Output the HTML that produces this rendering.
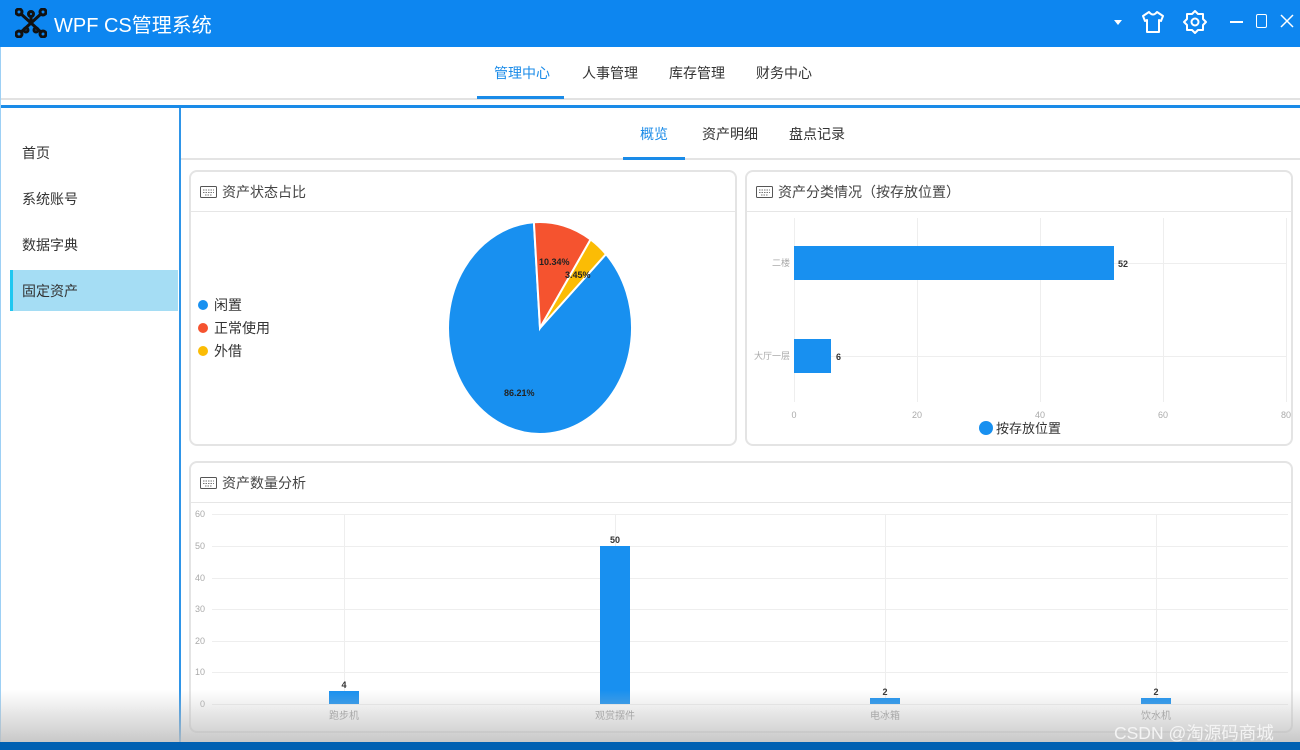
<!DOCTYPE html>
<html><head><meta charset="utf-8"><style>
*{margin:0;padding:0;box-sizing:border-box}
body{width:1300px;height:750px;position:relative;overflow:hidden;background:#fff;font-family:"Liberation Sans","Noto Sans CJK SC",sans-serif;color:#333}
.a{position:absolute}
.t{font-size:14px;white-space:nowrap}
.panel{position:absolute;border:2px solid #e4e4e4;border-radius:8px;background:#fff}
.ph{position:absolute;left:0;right:0;top:0;height:40px;border-bottom:1px solid #e6e6e6}
.ph span{position:absolute;left:31px;top:10px;font-size:14px;color:#444}
.kb{position:absolute;left:9px;top:14px}
</style></head><body>
<div class="a" style="left:0;top:0;width:1300px;height:47px;background:#0d86f0"></div>
<svg class="a" style="left:15px;top:8px" width="32" height="30" viewBox="0 0 32 30"><g stroke="#111" stroke-width="3" fill="none"><line x1="5" y1="5" x2="27" y2="25"/><line x1="27" y1="5" x2="5" y2="25"/><line x1="16" y1="15" x2="16" y2="8"/><circle cx="4" cy="4" r="3"/><circle cx="28" cy="4" r="3"/><circle cx="4" cy="26" r="3"/><circle cx="28" cy="26" r="3"/><circle cx="16" cy="6" r="2.5"/><circle cx="11" cy="22" r="2"/><circle cx="21" cy="22" r="2"/></g></svg>
<div class="a" style="left:54px;top:9px;font-size:20px;color:#fff">WPF CS管理系统</div>
<svg class="a" style="left:1113px;top:18px" width="10" height="8"><path d="M1 2h8l-4 5z" fill="#fff"/></svg>
<svg class="a" style="left:1140px;top:9px" width="26" height="26" viewBox="0 0 26 26"><path d="M9 3 L3 7 L5 12 L7 11 L7 23 L19 23 L19 11 L21 12 L23 7 L17 3 Q13 8 9 3Z" fill="none" stroke="#fff" stroke-width="2" stroke-linejoin="round"/></svg>
<svg class="a" style="left:1182px;top:9px" width="26" height="26" viewBox="0 0 26 26"><path d="M13 2 L16 5 L21 5 L21 10 L24 13 L21 16 L21 21 L16 21 L13 24 L10 21 L5 21 L5 16 L2 13 L5 10 L5 5 L10 5Z" fill="none" stroke="#fff" stroke-width="2" stroke-linejoin="round"/><circle cx="13" cy="13" r="3.5" fill="none" stroke="#fff" stroke-width="2"/></svg>
<div class="a" style="left:1230px;top:21px;width:13px;height:1.5px;background:#fff"></div>
<div class="a" style="left:1256px;top:14px;width:11px;height:14px;border:1.5px solid #fff;border-radius:2px"></div>
<svg class="a" style="left:1280px;top:14px" width="14" height="14"><path d="M1 1L13 13M13 1L1 13" stroke="#fff" stroke-width="1.5"/></svg>
<div class="a t" style="left:494px;top:63px;color:#1a8be8">管理中心</div>
<div class="a t" style="left:582px;top:63px">人事管理</div>
<div class="a t" style="left:669px;top:63px">库存管理</div>
<div class="a t" style="left:756px;top:63px">财务中心</div>
<div class="a" style="left:0;top:98px;width:1300px;height:2px;background:#e2e2e2"></div>
<div class="a" style="left:477px;top:96px;width:87px;height:3px;background:#1a8be8"></div>
<div class="a" style="left:0;top:105px;width:1300px;height:3px;background:#1a8be8"></div>
<div class="a" style="left:0;top:47px;width:1px;height:700px;background:#9dd0f5"></div>
<div class="a" style="left:179px;top:108px;width:2px;height:640px;background:#2f95e8"></div>
<div class="a t" style="left:22px;top:143px">首页</div>
<div class="a t" style="left:22px;top:189px">系统账号</div>
<div class="a t" style="left:22px;top:235px">数据字典</div>
<div class="a" style="left:10px;top:270px;width:168px;height:41px;background:#a5ddf4;border-left:3px solid #1fc7f0"></div>
<div class="a t" style="left:22px;top:281px">固定资产</div>
<div class="a t" style="left:640px;top:124px;color:#1a8be8">概览</div>
<div class="a t" style="left:702px;top:124px">资产明细</div>
<div class="a t" style="left:789px;top:124px">盘点记录</div>
<div class="a" style="left:181px;top:158px;width:1119px;height:2px;background:#e4e4e4"></div>
<div class="a" style="left:623px;top:157px;width:62px;height:3px;background:#1a8be8"></div>

<div class="panel" style="left:189px;top:170px;width:548px;height:276px">
<div class="ph"><svg class="kb" width="17" height="12"><rect x="0.5" y="0.5" width="16" height="11" rx="1" fill="none" stroke="#555"/><path d="M3 4h11M3 6.5h11M5 9h7" stroke="#777" stroke-dasharray="1.5 1"/></svg><span>资产状态占比</span></div>
</div>
<div class="a" style="left:198px;top:300px;width:10px;height:10px;border-radius:50%;background:#1890f0"></div>
<div class="a t" style="left:214px;top:295px">闲置</div>
<div class="a" style="left:198px;top:323px;width:10px;height:10px;border-radius:50%;background:#f5532f"></div>
<div class="a t" style="left:214px;top:318px">正常使用</div>
<div class="a" style="left:198px;top:346px;width:10px;height:10px;border-radius:50%;background:#fbbc05"></div>
<div class="a t" style="left:214px;top:341px">外借</div>
<svg class="a" style="left:0;top:0" width="1300" height="750">
<g stroke="#fff" stroke-width="2">
<path d="M540 328 L606 254.1 A92 106 0 1 1 533.9 222.2Z" fill="#1890f0"/>
<path d="M540 328 L533.9 222.2 A92 106 0 0 1 590.6 239.5Z" fill="#f5532f"/>
<path d="M540 328 L590.6 239.5 A92 106 0 0 1 606 254.1Z" fill="#fbbc05"/>
</g>
<g font-family="Liberation Sans" font-size="9" font-weight="bold" fill="#222">
<text x="539" y="265">10.34%</text><text x="565" y="278">3.45%</text><text x="504" y="396">86.21%</text>
</g>
</svg>

<div class="panel" style="left:745px;top:170px;width:548px;height:276px">
<div class="ph"><svg class="kb" width="17" height="12"><rect x="0.5" y="0.5" width="16" height="11" rx="1" fill="none" stroke="#555"/><path d="M3 4h11M3 6.5h11M5 9h7" stroke="#777" stroke-dasharray="1.5 1"/></svg><span>资产分类情况（按存放位置）</span></div>
</div>
<svg class="a" style="left:0;top:0" width="1300" height="750">
<g stroke="#eee" stroke-width="1">
<line x1="794.5" y1="218" x2="794.5" y2="402"/><line x1="917.5" y1="218" x2="917.5" y2="402"/><line x1="1040.5" y1="218" x2="1040.5" y2="402"/><line x1="1163.5" y1="218" x2="1163.5" y2="402"/><line x1="1286.5" y1="218" x2="1286.5" y2="402"/>
<line x1="794" y1="263.5" x2="1287" y2="263.5"/><line x1="794" y1="356.5" x2="1287" y2="356.5"/>
</g>
<rect x="794" y="246" width="320" height="34" fill="#1890f0"/>
<rect x="794" y="339" width="37" height="34" fill="#1890f0"/>
<g font-family="Liberation Sans" font-size="9" font-weight="bold" fill="#333"><text x="1118" y="267">52</text><text x="836" y="360">6</text></g>
<g font-family="Liberation Sans,Noto Sans CJK SC" font-size="9" fill="#aaa" text-anchor="end"><text x="790" y="266">二楼</text><text x="790" y="359">大厅一层</text></g>
<g font-family="Liberation Sans" font-size="9" fill="#aaa" text-anchor="middle"><text x="794" y="418">0</text><text x="917" y="418">20</text><text x="1040" y="418">40</text><text x="1163" y="418">60</text><text x="1286" y="418">80</text></g>
<circle cx="986" cy="428" r="7" fill="#1890f0"/>
<text x="996" y="433" font-family="Liberation Sans,Noto Sans CJK SC" font-size="13" fill="#333">按存放位置</text>
</svg>

<div class="panel" style="left:189px;top:461px;width:1104px;height:272px">
<div class="ph"><svg class="kb" width="17" height="12"><rect x="0.5" y="0.5" width="16" height="11" rx="1" fill="none" stroke="#555"/><path d="M3 4h11M3 6.5h11M5 9h7" stroke="#777" stroke-dasharray="1.5 1"/></svg><span>资产数量分析</span></div>
</div>
<svg class="a" style="left:0;top:0" width="1300" height="750">
<g stroke="#eee" stroke-width="1">
<line x1="212" y1="514.5" x2="1288" y2="514.5"/><line x1="212" y1="546.5" x2="1288" y2="546.5"/><line x1="212" y1="578.5" x2="1288" y2="578.5"/><line x1="212" y1="609.5" x2="1288" y2="609.5"/><line x1="212" y1="641.5" x2="1288" y2="641.5"/><line x1="212" y1="672.5" x2="1288" y2="672.5"/><line x1="212" y1="704.5" x2="1288" y2="704.5"/>
<line x1="344.5" y1="514" x2="344.5" y2="704"/><line x1="615.5" y1="514" x2="615.5" y2="704"/><line x1="885.5" y1="514" x2="885.5" y2="704"/><line x1="1156.5" y1="514" x2="1156.5" y2="704"/>
</g>
<g font-family="Liberation Sans" font-size="9" fill="#aaa" text-anchor="end"><text x="205" y="517">60</text><text x="205" y="549">50</text><text x="205" y="581">40</text><text x="205" y="612">30</text><text x="205" y="644">20</text><text x="205" y="675">10</text><text x="205" y="707">0</text></g>
<rect x="329" y="691" width="30" height="13" fill="#1890f0"/>
<rect x="600" y="546" width="30" height="158" fill="#1890f0"/>
<rect x="870" y="698" width="30" height="6" fill="#1890f0"/>
<rect x="1141" y="698" width="30" height="6" fill="#1890f0"/>
<g font-family="Liberation Sans" font-size="9" font-weight="bold" fill="#333" text-anchor="middle"><text x="344" y="688">4</text><text x="615" y="543">50</text><text x="885" y="695">2</text><text x="1156" y="695">2</text></g>
<g font-family="Liberation Sans,Noto Sans CJK SC" font-size="10" fill="#999" text-anchor="middle"><text x="344" y="719">跑步机</text><text x="615" y="719">观赏摆件</text><text x="885" y="719">电冰箱</text><text x="1156" y="719">饮水机</text></g>
</svg>
<div class="a" style="left:0;top:690px;width:1300px;height:53px;background:linear-gradient(rgba(200,200,200,0),rgba(190,190,190,0.85))"></div>
<div class="a" style="left:0;top:742px;width:1300px;height:8px;background:#0060b2"></div>
<div class="a" style="left:1114px;top:720px;font-size:17.5px;color:#f4f4f4;white-space:nowrap">CSDN @淘源码商城</div>
</body></html>
